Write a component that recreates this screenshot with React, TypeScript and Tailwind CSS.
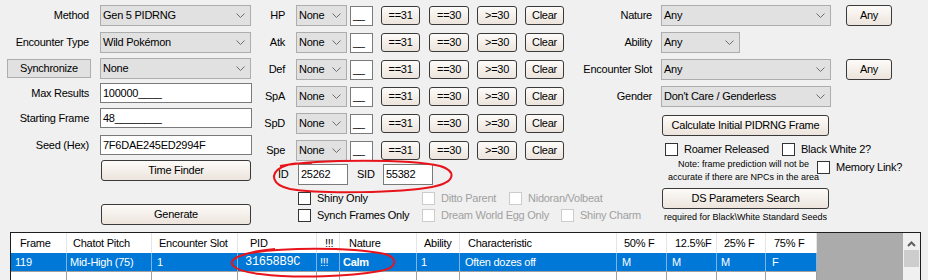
import type { ReactNode } from "react";

const Chevron = () => (
  <svg width="9" height="5" viewBox="0 0 9 5" className="shrink-0">
    <path d="M0.5 0.5 L4.5 4.5 L8.5 0.5" fill="none" stroke="#6d6d6d" strokeWidth="1" />
  </svg>
);

function Combo({ value, width }: { value: string; width: string }) {
  return (
    <div
      className={`${width} flex h-[21px] items-center justify-between border border-[#adadad] bg-[#e1e1e1] pl-[2px] pr-[5px]`}
    >
      <span className="whitespace-nowrap">{value}</span>
      <Chevron />
    </div>
  );
}

function TextBox({ value, width, height = "h-[20px]" }: { value: string; width: string; height?: string }) {
  return (
    <div className={`${width} ${height} flex items-center border border-[#7a7a7a] bg-white pl-[2px]`}>
      <span className="whitespace-nowrap">{value}</span>
    </div>
  );
}

function Btn({ children, className }: { children: ReactNode; className: string }) {
  return (
    <div
      className={`${className} flex items-center justify-center rounded-[3px] border border-[#3a3a3a] bg-gradient-to-b from-[#fdfbf9] to-[#ece4dc] whitespace-nowrap`}
    >
      {children}
    </div>
  );
}

function Check({ label, disabled }: { label: string; disabled?: boolean }) {
  return (
    <div className="flex h-[13px] shrink-0 items-center whitespace-nowrap">
      <div
        className={`h-[13px] w-[13px] shrink-0 border bg-white ${disabled ? "border-[#cccccc]" : "border-[#333333]"}`}
      />
      <span className={`ml-[6px] ${disabled ? "text-[#a0a0a0]" : ""}`}>{label}</span>
    </div>
  );
}

const stats = ["HP", "Atk", "Def", "SpA", "SpD", "Spe"];

const columns = [
  { name: "Frame", w: "w-[56px]", hp: "pl-[9px]", value: "119", dp: "pl-[4px]" },
  { name: "Chatot Pitch", w: "w-[85px]", hp: "pl-[6px]", value: "Mid-High (75)", dp: "pl-[3px]" },
  { name: "Encounter Slot", w: "w-[86px]", hp: "pl-[7px]", value: "1", dp: "pl-[5px]" },
  { name: "PID", w: "w-[79px]", hp: "pl-[12px]", value: "31658B9C", dp: "pl-[7px] font-['Liberation_Mono',monospace] text-[12px] tracking-[-0.3px]" },
  { name: "!!!", w: "w-[23px]", hp: "pl-[8px]", value: "!!!", dp: "pl-[3px]" },
  { name: "Nature", w: "w-[77px]", hp: "pl-[9px]", value: "Calm", dp: "pl-[3px] font-bold" },
  { name: "Ability", w: "w-[43px]", hp: "pl-[7px]", value: "1", dp: "pl-[4px]" },
  { name: "Characteristic", w: "w-[157px]", hp: "pl-[8px]", value: "Often dozes off", dp: "pl-[5px]" },
  { name: "50% F", w: "w-[50px]", hp: "pl-[7px]", value: "M", dp: "pl-[5px]" },
  { name: "12.5%F", w: "w-[50px]", hp: "pl-[8px]", value: "M", dp: "pl-[5px]" },
  { name: "25% F", w: "w-[49px]", hp: "pl-[7px]", value: "M", dp: "pl-[4px]" },
  { name: "75% F", w: "w-[51px]", hp: "pl-[8px]", value: "F", dp: "pl-[6px]" },
];

export default function App() {
  return (
    <div className="relative h-[280px] w-[928px] overflow-hidden bg-[#f0f0f0] font-['Liberation_Sans',Arial,sans-serif] text-[11px] tracking-[-0.25px] text-black">
      <div className="flex h-[232px]">
        {/* left column */}
        <div className="flex w-[252px] shrink-0 flex-col">
          <div className="mt-[5px] flex h-[21px] items-center">
            <div className="w-[89px] text-right">Method</div>
            <div className="ml-[11px]">
              <Combo value="Gen 5 PIDRNG" width="w-[151px]" />
            </div>
          </div>
          <div className="mt-[6px] flex h-[21px] items-center">
            <div className="w-[89px] text-right">Encounter Type</div>
            <div className="ml-[11px]">
              <Combo value="Wild Pokémon" width="w-[151px]" />
            </div>
          </div>
          <div className="mt-[5px] flex h-[21px] items-center">
            <div className="ml-[7px] flex h-[19px] w-[84px] items-center justify-center border border-[#adadad] bg-[#e1e1e1]">
              Synchronize
            </div>
            <div className="ml-[9px]">
              <Combo value="None" width="w-[151px]" />
            </div>
          </div>
          <div className="mt-[4px] flex h-[20px] items-center">
            <div className="w-[89px] text-right">Max Results</div>
            <div className="ml-[11px]">
              <TextBox value="100000____" width="w-[152px]" />
            </div>
          </div>
          <div className="mt-[5px] flex h-[20px] items-center">
            <div className="w-[89px] text-right">Starting Frame</div>
            <div className="ml-[11px]">
              <TextBox value="48________" width="w-[152px]" />
            </div>
          </div>
          <div className="mt-[7px] flex h-[20px] items-center">
            <div className="w-[89px] text-right">Seed (Hex)</div>
            <div className="ml-[11px]">
              <TextBox value="7F6DAE245ED2994F" width="w-[152px]" />
            </div>
          </div>
          <Btn className="ml-[101px] mt-[5px] h-[21px] w-[150px]">Time Finder</Btn>
          <Btn className="ml-[101px] mt-[23px] h-[21px] w-[150px]">Generate</Btn>
        </div>

        {/* IV column */}
        <div className="ml-[10px] flex w-[310px] shrink-0 flex-col pt-[5px]">
          <div className="flex flex-col gap-[6px]">
            {stats.map((s) => (
              <div key={s} className="flex h-[21px] items-center">
                <div className="w-[23px] text-right">{s}</div>
                <div className="ml-[11px]">
                  <Combo value="None" width="w-[51px]" />
                </div>
                <div className="ml-[3px]">
                  <TextBox value="__" width="w-[23px]" />
                </div>
                <Btn className="ml-[8px] h-[19px] w-[39px]">==31</Btn>
                <Btn className="ml-[9px] h-[19px] w-[40px]">==30</Btn>
                <Btn className="ml-[8px] h-[19px] w-[40px]">&gt;=30</Btn>
                <Btn className="ml-[8px] h-[19px] w-[39px]">Clear</Btn>
              </div>
            ))}
          </div>
          <div className="mt-[3px] flex h-[21px] items-center">
            <div className="ml-[16px] w-[20px]">ID</div>
            <TextBox value="25262" width="w-[50px]" height="h-[21px]" />
            <div className="ml-[9px] w-[26px]">SID</div>
            <TextBox value="55382" width="w-[50px]" height="h-[21px]" />
          </div>
          <div className="ml-[36px] mt-[7px] flex">
            <div className="w-[124px] shrink-0">
              <Check label="Shiny Only" />
            </div>
            <div className="w-[87px] shrink-0">
              <Check label="Ditto Parent" disabled />
            </div>
            <Check label="Nidoran/Volbeat" disabled />
          </div>
          <div className="ml-[36px] mt-[4px] flex">
            <div className="w-[124px] shrink-0">
              <Check label="Synch Frames Only" />
            </div>
            <div className="w-[139px] shrink-0">
              <Check label="Dream World Egg Only" disabled />
            </div>
            <Check label="Shiny Charm" disabled />
          </div>
        </div>

        {/* right column */}
        <div className="flex flex-1 flex-col pt-[5px]">
          <div className="flex h-[21px] items-center">
            <div className="w-[80px] text-right">Nature</div>
            <div className="ml-[9px]">
              <Combo value="Any" width="w-[170px]" />
            </div>
            <Btn className="ml-[15px] h-[21px] w-[46px]">Any</Btn>
          </div>
          <div className="mt-[6px] flex h-[21px] items-center">
            <div className="w-[80px] text-right">Ability</div>
            <div className="ml-[9px]">
              <Combo value="Any" width="w-[79px]" />
            </div>
          </div>
          <div className="mt-[6px] flex h-[21px] items-center">
            <div className="w-[80px] text-right">Encounter Slot</div>
            <div className="ml-[9px]">
              <Combo value="Any" width="w-[170px]" />
            </div>
            <Btn className="ml-[15px] h-[21px] w-[46px]">Any</Btn>
          </div>
          <div className="mt-[6px] flex h-[21px] items-center">
            <div className="w-[80px] text-right">Gender</div>
            <div className="ml-[9px]">
              <Combo value="Don't Care / Genderless" width="w-[170px]" />
            </div>
          </div>
          <Btn className="ml-[90px] mt-[8px] h-[21px] w-[167px]">Calculate Initial PIDRNG Frame</Btn>
          <div className="ml-[93px] mt-[7px] flex">
            <div className="w-[117px] shrink-0">
              <Check label="Roamer Released" />
            </div>
            <Check label="Black White 2?" />
          </div>
          <div className="mt-[2px] flex items-start">
            <div className="ml-[95px] w-[153px] shrink-0 text-center text-[9px] leading-[13px] tracking-normal whitespace-nowrap">
              <div>Note: frame prediction will not be</div>
              <div>accurate if there are NPCs in the area</div>
            </div>
            <div className="ml-[-3px] mt-[3px]">
              <Check label="Memory Link?" />
            </div>
          </div>
          <Btn className="ml-[90px] mt-[4px] h-[21px] w-[167px]">DS Parameters Search</Btn>
          <div className="ml-[91px] mt-[2px] w-[165px] text-center text-[9px] leading-[12px] tracking-normal whitespace-nowrap">
            required for Black\White Standard Seeds
          </div>
        </div>
      </div>

      {/* results list */}
      <div className="ml-[10px] flex h-[60px] w-[911px] border border-[#1e1e1e] bg-white">
        <div className="flex w-[806px] shrink-0 flex-col">
          <div className="flex h-[20px] bg-white">
            {columns.map((c) => (
              <div
                key={c.name}
                className={`${c.w} ${c.hp} flex shrink-0 items-center border-r border-[#e5e5e5] whitespace-nowrap`}
              >
                {c.name}
              </div>
            ))}
          </div>
          <div className="flex h-[19px] bg-[#0078d7] text-white">
            {columns.map((c) => (
              <div
                key={c.name}
                className={`${c.w} ${c.dp} flex shrink-0 items-center border-r border-[#7fb5e6] whitespace-nowrap`}
              >
                {c.value}
              </div>
            ))}
          </div>
          <div className="flex h-[20px] border-t border-[#a0a0a0]">
            {columns.map((c) => (
              <div key={c.name} className={`${c.w} shrink-0 border-r border-[#a0a0a0]`} />
            ))}
          </div>
        </div>
        <div className="w-[86px] shrink-0 bg-[#ababab]" />
        <div className="flex w-[17px] shrink-0 flex-col items-center bg-[#f0f0f0]">
          <svg width="9" height="6" viewBox="0 0 9 6" className="mt-[8px]">
            <path d="M1 5 L4.5 1.5 L8 5" fill="none" stroke="#606060" strokeWidth="2" />
          </svg>
          <div className="mt-[3px] h-[17px] w-[15px] bg-[#cdcdcd]" />
        </div>
      </div>

      {/* red hand-drawn marks */}
      <svg className="pointer-events-none absolute left-0 top-0" width="928" height="280">
        <path
          d="M280 166 C320 159, 410 159, 440 166 C456 171, 457 182, 432 187 C400 193, 320 194, 290 189 C272 185, 269 174, 282 167 C290 163, 300 163, 312 163"
          fill="none"
          stroke="#e8141c"
          strokeWidth="2"
        />
        <path
          d="M245 254 C280 247, 350 247, 385 254 C398 258, 398 268, 380 271 C350 276, 300 279, 260 274 C232 271, 224 262, 240 256 C250 252, 262 250, 275 249"
          fill="none"
          stroke="#e8141c"
          strokeWidth="2"
        />
      </svg>
    </div>
  );
}
